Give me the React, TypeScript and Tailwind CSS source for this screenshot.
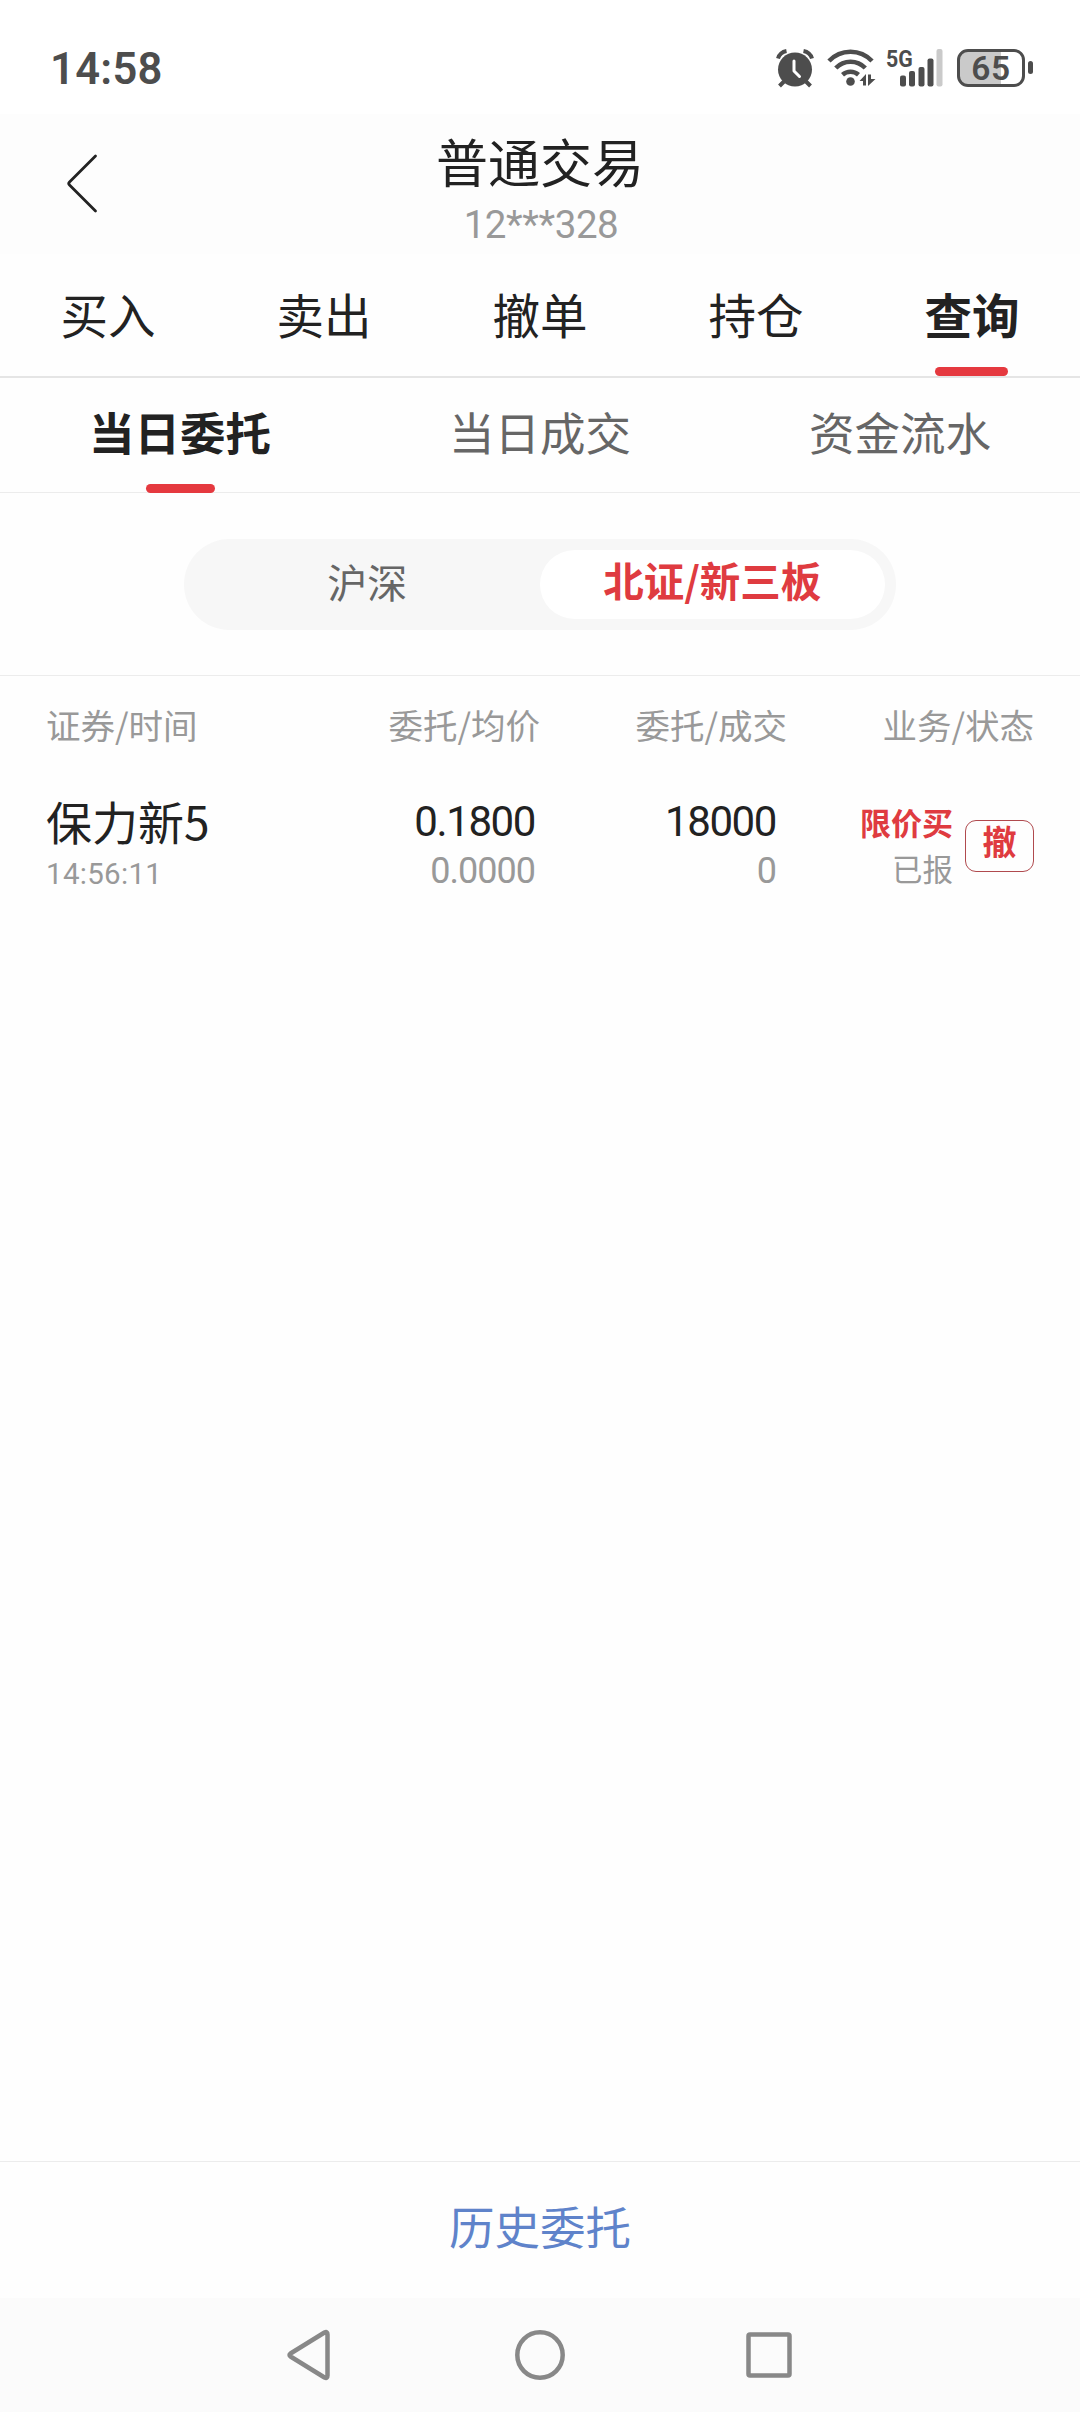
import clsx from 'clsx';

const MAIN_TABS = ['买入', '卖出', '撤单', '持仓', '查询'];
const SUB_TABS = ['当日委托', '当日成交', '资金流水'];
const COLUMNS = ['证券/时间', '委托/均价', '委托/成交', '业务/状态'];

const ORDERS = [
  {
    name: '保力新5',
    time: '14:56:11',
    price: '0.1800',
    avgPrice: '0.0000',
    amount: '18000',
    filled: '0',
    type: '限价买',
    status: '已报',
  },
];

function AlarmIcon() {
  return (
    <svg width="38" height="40" viewBox="0 0 38 40" fill="none">
      <circle cx="19" cy="21.5" r="17" fill="#4d4d4d" />
      <path d="M2 10.5A11 11 0 0 1 10.5 3M36 10.5A11 11 0 0 0 27.500 3" stroke="#4d4d4d" strokeWidth="4" />
      <path d="M8 33.500l-4.500 4.500M30 33.500l4.500 4.500" stroke="#4d4d4d" strokeWidth="4" />
      <path d="M18 13v10l5.500 5.500" stroke="#fff" strokeWidth="3" strokeLinecap="round" strokeLinejoin="round" />
    </svg>
  );
}

function WifiIcon() {
  return (
    <svg width="49" height="40" viewBox="0 0 49 40" fill="none">
      <g stroke="#4d4d4d" strokeWidth="4.500">
        <path d="M2 13a29.500 29.500 0 0 1 43 0" />
        <path d="M8.800 20a20.500 20.500 0 0 1 29.500 0" />
        <path d="M15.500 26.800a12 12 0 0 1 16 0" />
      </g>
      <circle cx="23.500" cy="33.500" r="4.300" fill="#4d4d4d" />
      <path d="M32.500 33l6.500-7V37.500h-3V33zM41 26.500h3v4.500h4.500l-7.500 7z" fill="#4d4d4d" />
    </svg>
  );
}

function SignalIcon() {
  return (
    <svg width="58" height="40" viewBox="0 0 58 40">
      <g fill="#4d4d4d">
        <rect x="14" y="27.500" width="6" height="11" rx="2" />
        <rect x="23" y="23" width="6" height="15.500" rx="2" />
        <rect x="32.500" y="19" width="6" height="19.500" rx="2" />
        <rect x="41.500" y="10.500" width="6" height="28" rx="2" />
      </g>
      <rect x="50.500" y="1" width="6" height="37.500" rx="2" fill="#cacaca" />
    </svg>
  );
}

function StatusBar() {
  return (
    <div className="flex h-[114px] shrink-0 items-start bg-white font-[Roboto,sans-serif] text-[#4d4d4d]">
      <div className="pt-[45px] pl-[50px] text-[43.5px] leading-[50px] font-semibold tracking-[0.3px]">14:58</div>
      <div className="mt-[48px] mr-[47px] ml-auto flex h-[40px]">
        <AlarmIcon />
        <div className="ml-[13px]">
          <WifiIcon />
        </div>
        <div className="relative ml-[10px]">
          <SignalIcon />
          <span className="absolute top-[-1px] left-0 origin-left scale-x-87 text-[24.5px] leading-[24px] font-bold">
            5G
          </span>
        </div>
        <div className="mt-px ml-[13px] flex items-start">
          <div className="flex h-[38px] w-[68px] items-center justify-center rounded-[11px] border-[3.500px] border-[#4d4d4d] bg-linear-to-r from-[#cacaca] from-66% to-white to-66% pt-px text-[33.5px] leading-[38px] font-semibold tracking-[0.5px]">
            65
          </div>
          <div className="mt-[12px] ml-[3px] h-[13px] w-[5px] rounded-full bg-[#4d4d4d]" />
        </div>
      </div>
    </div>
  );
}

function Header() {
  return (
    <header className="relative flex h-[140px] shrink-0 flex-col items-center bg-[#fdfdfd] pt-[17px]">
      <button className="absolute top-[38px] left-[62px]" aria-label="返回">
        <svg width="40" height="62" viewBox="0 0 40 62" fill="none">
          <path
            d="M33.500 4L7.500 30q-1.500 1.500 0 3L33.500 59"
            stroke="#222"
            strokeWidth="2.800"
            strokeLinecap="round"
            strokeLinejoin="round"
          />
        </svg>
      </button>
      <h1 className="text-[52px] leading-[60px] text-[#222]">普通交易</h1>
      <p className="mt-[14px] ml-[2px] font-[Roboto,sans-serif] text-[38.5px] leading-[40px] tracking-[-0.4px] text-[#999]">
        12***328
      </p>
    </header>
  );
}

function Tabs() {
  return (
    <>
      <nav className="grid h-[124px] shrink-0 grid-cols-5 border-b-2 border-[#e5e5e5]">
        {MAIN_TABS.map((tab) => {
          const active = tab === '查询';
          return (
            <div key={tab} className="flex flex-col items-center justify-between pt-[30px]">
              <span className={clsx('text-[47.5px] leading-[60px] text-[#222]', active && 'font-bold')}>{tab}</span>
              {active && <span className="mr-[2px] h-[9px] w-[73px] rounded-full bg-[#e5393f]" />}
            </div>
          );
        })}
      </nav>
      <nav className="grid h-[115px] shrink-0 grid-cols-3 border-b border-[#ececec]">
        {SUB_TABS.map((tab) => {
          const active = tab === '当日委托';
          return (
            <div key={tab} className="flex flex-col items-center justify-between pt-[23px]">
              <span
                className={clsx('text-[45.5px] leading-[60px]', active ? 'font-bold text-[#222]' : 'text-[#666]')}
              >
                {tab}
              </span>
              {active && <span className="-mb-px h-[9px] w-[69px] rounded-full bg-[#e5393f]" />}
            </div>
          );
        })}
      </nav>
    </>
  );
}

function MarketSwitch() {
  return (
    <div className="flex h-[183px] shrink-0 justify-center border-b border-[#ececec] pt-[46px]">
      <div className="grid h-[91px] w-[712px] grid-cols-2 rounded-full bg-[#f7f7f7] py-[11px] pr-[11px] text-[40px]">
        <div className="flex items-center justify-center pb-[8px] pl-[16px] text-[#666]">沪深</div>
        <div className="ml-[5px] flex items-center justify-center rounded-full bg-white pb-[8px] text-[40.5px] font-bold text-[#df3b40]">
          北证/新三板
        </div>
      </div>
    </div>
  );
}

function OrderTable() {
  return (
    <section className="flex-1 px-[46px] pt-[28px]">
      <div className="grid grid-cols-[246px_248px_247px_247px] text-right text-[34.5px] leading-[40px] text-[#999]">
        {COLUMNS.map((col) => (
          <div key={col} className="first:text-left">
            {col}
          </div>
        ))}
      </div>
      {ORDERS.map((order) => (
        <div key={order.time} className="mt-[46px] grid grid-cols-[246px_243px_241px_258px] text-right text-[#999]">
          <div className="pt-[5px] text-left">
            <div className="text-[46px] leading-[50px] text-[#222]">{order.name}</div>
            <div className="mt-[14px] font-[Roboto,sans-serif] text-[29.5px] leading-[30px] tracking-[0.3px]">
              {order.time}
            </div>
          </div>
          <div className="pt-[7px] font-[Roboto,sans-serif] font-[450] tracking-[-1.4px]">
            <div className="text-[42px] leading-[50px] text-[#222]">{order.price}</div>
            <div className="mt-[4px] text-[36px] leading-[40px] tracking-[-1px]">{order.avgPrice}</div>
          </div>
          <div className="pt-[7px] font-[Roboto,sans-serif] font-[450] tracking-[-1.4px]">
            <div className="text-[42px] leading-[50px] text-[#222]">{order.amount}</div>
            <div className="mt-[4px] text-[36px] leading-[40px] tracking-[-1px]">{order.filled}</div>
          </div>
          <div className="flex justify-end">
            <div className="pt-[12px]">
              <div className="text-[31px] leading-[40px] font-bold text-[#df3b40]">{order.type}</div>
              <div className="mt-[6px] text-[30.5px] leading-[40px]">{order.status}</div>
            </div>
            <button className="mt-[30px] ml-[12px] flex h-[52px] w-[69px] items-center justify-center rounded-[11px] border border-[#b04a4e] pb-[11px] text-[34px] leading-[40px] font-bold text-[#df3b40]">
              撤
            </button>
          </div>
        </div>
      ))}
    </section>
  );
}

function NavBar() {
  return (
    <div className="flex h-[114px] shrink-0 items-center justify-center bg-[#fbfbfb]">
      <svg width="520" height="60" viewBox="0 0 520 60" fill="none" stroke="#888" strokeWidth="4.500">
        <path d="M10.500 28.500L44.500 7.500q3-1.500 3 2v41q0 3.500-3 2L10.500 31.500q-2-1.500 0-3z" strokeLinejoin="round" />
        <circle cx="260" cy="30" r="22.700" />
        <rect x="468.500" y="9.500" width="41" height="41" rx="1.500" />
      </svg>
    </div>
  );
}

export default function App() {
  return (
    <main className="flex h-[2412px] w-[1080px] flex-col bg-[#fefefe] font-['Noto_Sans_CJK_SC',sans-serif]">
      <StatusBar />
      <Header />
      <Tabs />
      <MarketSwitch />
      <OrderTable />
      <div className="h-[137px] shrink-0 border-t border-[#ececec] pt-[33px] text-center text-[45.5px] leading-[60px] text-[#5f83ca]">
        历史委托
      </div>
      <NavBar />
    </main>
  );
}
